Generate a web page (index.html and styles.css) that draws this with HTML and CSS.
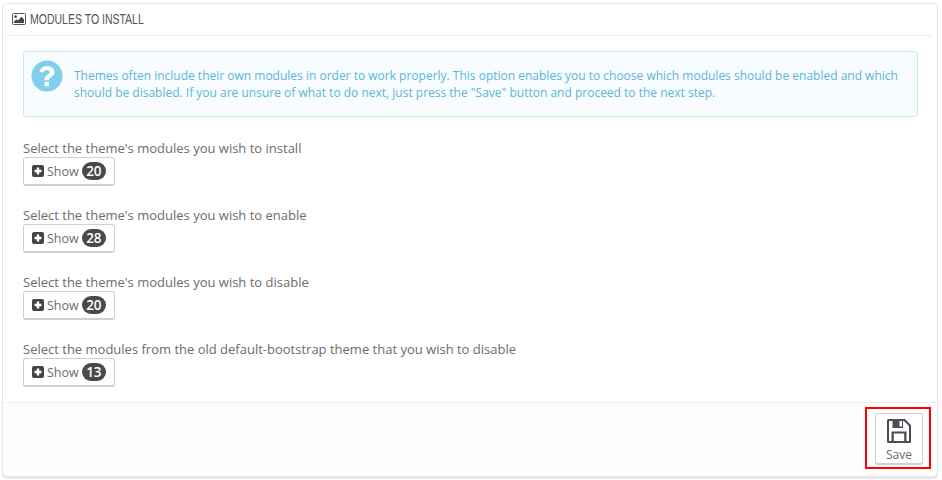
FILE: index.html
```html
<!DOCTYPE html>
<html lang="en">
<head>
<meta charset="utf-8">
<title>Modules to install</title>
<link rel="stylesheet" href="styles.css">
</head>
<body>
<section class="panel">
  <header class="panel-heading">
    <svg class="heading-icon" viewBox="0 0 14 12" width="14" height="12" aria-hidden="true">
      <rect x="0.5" y="0.5" width="13" height="11" rx="1" fill="#fff" stroke="#555"/>
      <circle cx="3.6" cy="3.6" r="1.3" fill="#444"/>
      <path d="M2 10V8.4L4.4 6.2 6 7.6 9.4 3.8 12 6.4V10Z" fill="#444"/>
    </svg>
    <span class="heading-text">MODULES TO INSTALL</span>
  </header>
  <div class="panel-body">
    <div class="alert">
      <svg class="alert-icon" viewBox="0 0 32 32" width="32" height="32" aria-hidden="true">
        <circle cx="16" cy="16" r="15.5" fill="#81cfea"/>
        <path d="M16 6.2c-4 0-6.6 1.900-7.600 5l3.500 1.500c.6-1.700 1.900-2.800 3.800-2.800 1.800 0 3 .9 3 2.200 0 1.200-.8 1.800-2.200 2.700-1.900 1.200-3 2.600-3 4.700v.8h4.500v-.5c0-1.100.6-1.700 2-2.600 2-1.300 3.500-2.800 3.500-5.300 0-3.400-3-5.700-7.500-5.700z" fill="#fff"/>
        <rect x="13.500" y="21.800" width="4.500" height="4.500" fill="#fff"/>
      </svg>
      <p>Themes often include their own modules in order to work properly. This option enables you to choose which modules should be enabled and which should be disabled. If you are unsure of what to do next, just press the "Save" button and proceed to the next step.</p>
    </div>
    <div class="group">
      <label>Select the theme's modules you wish to install</label>
      <button class="btn-show" type="button"><svg class="plus" viewBox="0 0 12 12" width="12" height="12" aria-hidden="true"><path d="M2 0h8a2 2 0 0 1 2 2v8a2 2 0 0 1-2 2H2a2 2 0 0 1-2-2V2a2 2 0 0 1 2-2zm2.800 2.500v2.300H2.500v2.400h2.300v2.300h2.400V7.200h2.300V4.800H7.200V2.500z" fill="#444"/></svg>Show<span class="badge">20</span></button>
    </div>
    <div class="group">
      <label>Select the theme's modules you wish to enable</label>
      <button class="btn-show" type="button"><svg class="plus" viewBox="0 0 12 12" width="12" height="12" aria-hidden="true"><path d="M2 0h8a2 2 0 0 1 2 2v8a2 2 0 0 1-2 2H2a2 2 0 0 1-2-2V2a2 2 0 0 1 2-2zm2.800 2.500v2.300H2.500v2.400h2.300v2.300h2.400V7.200h2.300V4.800H7.200V2.500z" fill="#444"/></svg>Show<span class="badge">28</span></button>
    </div>
    <div class="group">
      <label>Select the theme's modules you wish to disable</label>
      <button class="btn-show" type="button"><svg class="plus" viewBox="0 0 12 12" width="12" height="12" aria-hidden="true"><path d="M2 0h8a2 2 0 0 1 2 2v8a2 2 0 0 1-2 2H2a2 2 0 0 1-2-2V2a2 2 0 0 1 2-2zm2.800 2.500v2.300H2.500v2.400h2.300v2.300h2.400V7.200h2.300V4.800H7.200V2.500z" fill="#444"/></svg>Show<span class="badge">20</span></button>
    </div>
    <div class="group">
      <label>Select the modules from the old default-bootstrap theme that you wish to disable</label>
      <button class="btn-show" type="button"><svg class="plus" viewBox="0 0 12 12" width="12" height="12" aria-hidden="true"><path d="M2 0h8a2 2 0 0 1 2 2v8a2 2 0 0 1-2 2H2a2 2 0 0 1-2-2V2a2 2 0 0 1 2-2zm2.800 2.500v2.300H2.500v2.400h2.300v2.300h2.400V7.200h2.300V4.800H7.200V2.500z" fill="#444"/></svg>Show<span class="badge">13</span></button>
    </div>
  </div>
  <footer class="panel-footer">
    <button class="btn-save" type="button">
      <svg viewBox="0 0 24 24" width="24" height="24" aria-hidden="true">
        <path fill-rule="evenodd" d="M1.500 0H18l6 6v16.500a1.500 1.500 0 0 1-1.500 1.500h-21A1.500 1.500 0 0 1 0 22.500v-21A1.500 1.500 0 0 1 1.500 0zM2 2v20h2.500v-9.500h15V22H22V7l-5-5h-1v7H5.500V2zm10.500 0v5.500H15V2zM6.800 14.500V22h10.400v-7.500z" fill="#4d4d55"/>
      </svg>
      <span>Save</span>
    </button>
    <div class="highlight"></div>
  </footer>
</section>
</body>
</html>
```
FILE: styles.css
```css
* { box-sizing: border-box; }
html, body { margin: 0; padding: 0; background: #fff; }
body {
  width: 942px;
  height: 480px;
  padding: 3px 4px 0 2px;
  font-family: "Open Sans", sans-serif;
  font-size: 13px;
  color: #6c6c6c;
  overflow: hidden;
}
.panel {
  position: relative;
  height: 474px;
  border: 1px solid #e6e6e6;
  border-radius: 5px;
  box-shadow: 0 2px 0 #e6e6e6;
  background: #fff;
  display: flex;
  flex-direction: column;
}
.panel-heading {
  height: 32px;
  margin: 0 4px;
  padding: 0 5px 2px;
  border-bottom: 1px solid #eee;
  display: flex;
  align-items: center;
  gap: 4px;
  font-family: "Liberation Sans", sans-serif;
  font-size: 14px;
  color: #555;
}
.heading-icon { flex: none; }
.heading-text {
  display: inline-block;
  transform: scaleX(0.75);
  transform-origin: left center;
  white-space: nowrap;
}
.panel-body {
  flex: 1;
  padding: 15px 19px 0 20px;
}
.alert {
  height: 66px;
  display: flex;
  align-items: flex-start;
  gap: 11px;
  padding: 8px 7px;
  border: 1px solid #c5e9f3;
  border-radius: 3px;
  background: #f8fcfe;
  color: #5ab6d8;
  font-size: 12px;
}
.alert-icon { flex: none; }
.alert p {
  margin: 7px 0 0;
  line-height: 17px;
}
.group { margin-top: 21px; }
.group label {
  display: block;
  line-height: 17px;
  height: 17px;
}
.alert + .group { margin-top: 23px; }
.btn-show {
  display: flex;
  align-items: center;
  width: 92px;
  height: 29px;
  padding: 0 8px;
  border: 1px solid #d0d0d0;
  border-bottom-width: 2px;
  border-radius: 3px;
  background: #fff;
  font: inherit;
  font-size: 12.500px;
  color: #6c6c6c;
}
.plus { margin-right: 3px; flex: none; }
.badge {
  margin-left: 3px;
  width: 25px;
  height: 18px;
  border-radius: 9px;
  background: #4a4a4a;
  color: #fff;
  font-weight: 600;
  font-size: 13.500px;
  line-height: 18px;
  text-align: center;
}
.panel-footer {
  position: relative;
  height: 74px;
  border-top: 1px solid #eee;
  background: #fcfdfe;
  border-radius: 0 0 5px 5px;
  display: flex;
  justify-content: flex-end;
  padding: 10px 14px 0 0;
}
.btn-save {
  width: 48px;
  height: 52px;
  padding: 5px 0 0;
  border: 1px solid #d0d0d0;
  border-bottom-width: 2px;
  border-radius: 3px;
  background: #fff;
  font: inherit;
  font-size: 12px;
  color: #6c6c6c;
  display: flex;
  flex-direction: column;
  align-items: center;
  gap: 3px;
}
.highlight {
  position: absolute;
  left: 862px;
  top: 4px;
  width: 66px;
  height: 62px;
  border: 2px solid #f00;
  pointer-events: none;
}
```
